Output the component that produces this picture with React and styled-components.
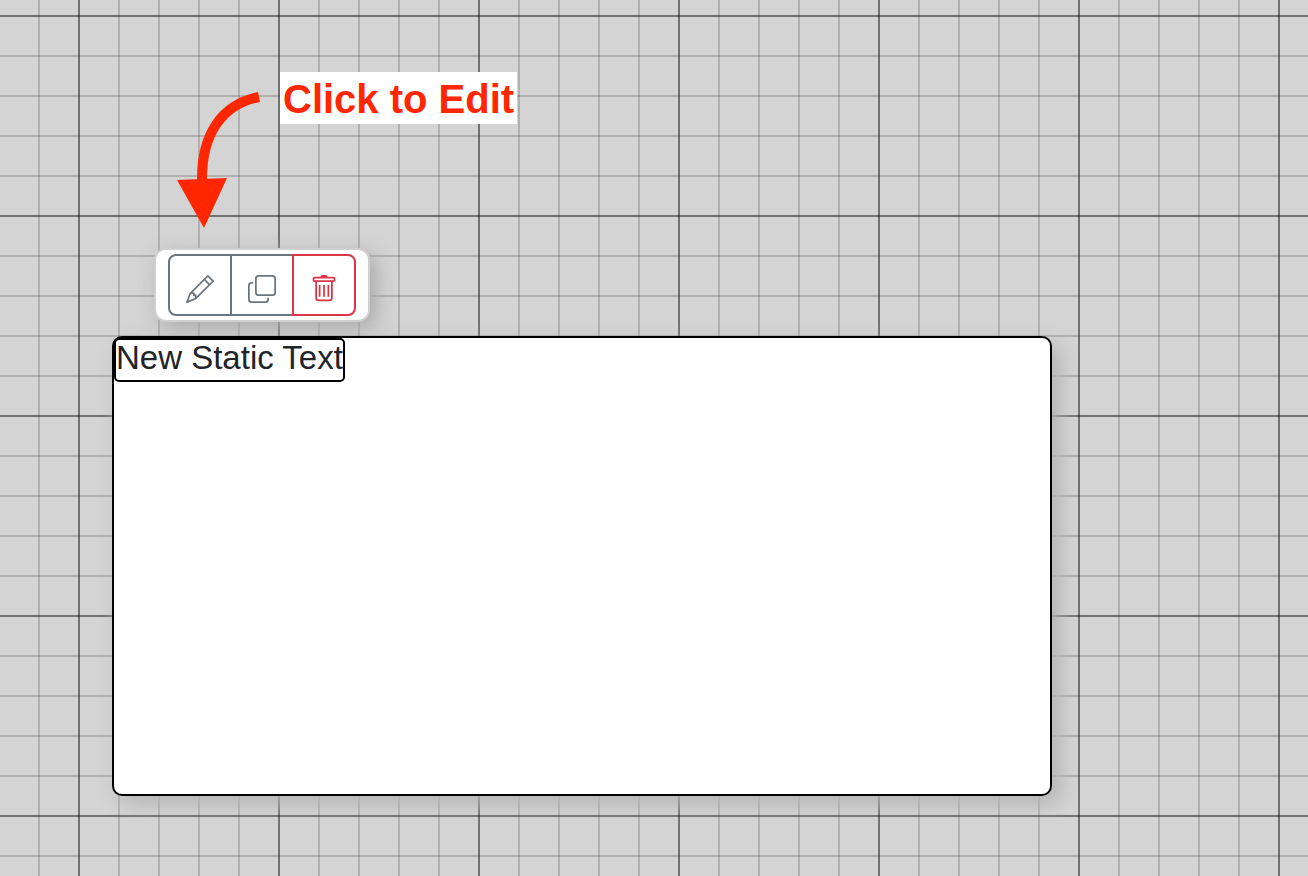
import React from "react";
import styled, { createGlobalStyle, css } from "styled-components";
import { BsCopy, BsPencil, BsTrash } from "react-icons/bs";

function App() {
  return (
    <>
      <GlobalStyle />
      <Canvas>
        <HintRow>
          <Arrow viewBox="0 0 84 140" aria-hidden="true">
            <path
              d="M83 9 C47 16 25 45 26 94"
              fill="none"
              stroke="#ff2600"
              strokeWidth="10"
            />
            <path d="M1 92 L51 90 L28 140 Z" fill="#ff2600" />
          </Arrow>
          <Hint>Click to Edit</Hint>
        </HintRow>
        <Toolbar role="group" aria-label="Widget actions">
          <ToolButton type="button" aria-label="Edit">
            <BsPencil />
          </ToolButton>
          <ToolButton type="button" aria-label="Copy">
            <BsCopy />
          </ToolButton>
          <ToolButton type="button" aria-label="Delete" $danger>
            <BsTrash />
          </ToolButton>
        </Toolbar>
        <Panel>
          <StaticText>New Static Text</StaticText>
        </Panel>
      </Canvas>
    </>
  );
}

const GlobalStyle = createGlobalStyle`
  *,
  *::before,
  *::after {
    box-sizing: border-box;
  }

  body {
    margin: 0;
    font-family: "Liberation Sans", Arial, sans-serif;
    color: #212529;
  }
`;

const Canvas = styled.main`
  display: flex;
  flex-direction: column;
  align-items: flex-start;
  min-height: 100vh;
  padding: 72px 256px 80px 112px;
  background-color: #d4d4d4;
  background-image:
    linear-gradient(to right, rgba(0, 0, 0, 0.36) 2px, transparent 2px),
    linear-gradient(to bottom, rgba(0, 0, 0, 0.36) 2px, transparent 2px),
    linear-gradient(to right, rgba(0, 0, 0, 0.17) 2px, transparent 2px),
    linear-gradient(to bottom, rgba(0, 0, 0, 0.17) 2px, transparent 2px);
  background-size: 200px 200px, 200px 200px, 40px 40px, 40px 40px;
  background-position: 78px 15px;
`;

const HintRow = styled.div`
  display: flex;
  align-items: flex-start;
  gap: 20px;
  margin-bottom: 20px;
  padding-left: 64px;
`;

const Arrow = styled.svg`
  flex: none;
  width: 84px;
  height: 140px;
  margin-top: 16px;
`;

const Hint = styled.div`
  padding: 4px 3px 2px;
  background-color: #fff;
  color: #ff2600;
  font-size: 40px;
  font-weight: 700;
  line-height: 46px;
  white-space: nowrap;
`;

const Toolbar = styled.div`
  display: flex;
  margin: 0 0 14px 42px;
  padding: 4px 12px;
  border: 2px solid #d0d0d0;
  border-radius: 12px;
  background-color: #fff;
  box-shadow: 6px 6px 20px #a9a9a9;
`;

const ToolButton = styled.button`
  width: 64px;
  height: 62px;
  padding: 19px 16px 11px;
  border: 2px solid #6c757d;
  background-color: #fff;
  color: #6c757d;
  cursor: pointer;

  & + & {
    margin-left: -2px;
  }

  &:first-child {
    border-radius: 8px 0 0 8px;
  }

  &:last-child {
    border-radius: 0 8px 8px 0;
  }

  svg {
    display: block;
    width: 28px;
    height: 28px;
  }

  ${({ $danger }) =>
    $danger &&
    css`
      border-color: #dc3545;
      color: #dc3545;
    `}
`;

const Panel = styled.section`
  align-self: stretch;
  min-height: 460px;
  border: 2px solid #000;
  border-radius: 10px;
  background-color: #fff;
  box-shadow: 8px 8px 20px #b4b4b4;
`;

const StaticText = styled.div`
  width: fit-content;
  padding-bottom: 4px;
  border: 2px solid #000;
  border-radius: 5px;
  font-size: 33px;
  line-height: 36px;
  white-space: nowrap;
`;

export default App;
